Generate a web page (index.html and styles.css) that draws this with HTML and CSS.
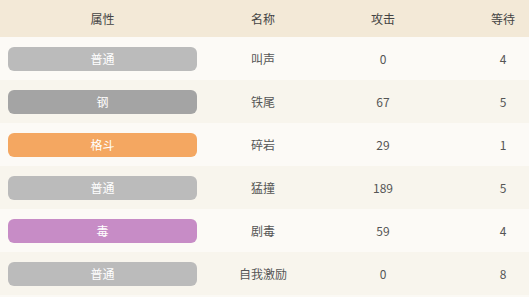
FILE: index.html
```html
<!DOCTYPE html>
<html lang="zh">
<head>
<meta charset="utf-8">
<link rel="stylesheet" href="styles.css">
</head>
<body>
<div class="table">
  <div class="row head">
    <div class="cell">属性</div><div class="cell">名称</div><div class="cell">攻击</div><div class="cell">等待</div>
  </div>
  <div class="row odd">
    <div class="cell"><span class="badge normal">普通</span></div><div class="cell">叫声</div><div class="cell">0</div><div class="cell">4</div>
  </div>
  <div class="row even">
    <div class="cell"><span class="badge steel">钢</span></div><div class="cell">铁尾</div><div class="cell">67</div><div class="cell">5</div>
  </div>
  <div class="row odd">
    <div class="cell"><span class="badge fight">格斗</span></div><div class="cell">碎岩</div><div class="cell">29</div><div class="cell">1</div>
  </div>
  <div class="row even">
    <div class="cell"><span class="badge normal">普通</span></div><div class="cell">猛撞</div><div class="cell">189</div><div class="cell">5</div>
  </div>
  <div class="row odd">
    <div class="cell"><span class="badge poison">毒</span></div><div class="cell">剧毒</div><div class="cell">59</div><div class="cell">4</div>
  </div>
  <div class="row even">
    <div class="cell"><span class="badge normal">普通</span></div><div class="cell">自我激励</div><div class="cell">0</div><div class="cell">8</div>
  </div>
</div>
</body>
</html>
```
FILE: styles.css
```css
html, body {
  margin: 0;
  padding: 0;
  background: #fbf9f4;
}
body {
  width: 529px;
  height: 297px;
  overflow: hidden;
  font-family: "Noto Sans CJK SC", "Noto Sans", sans-serif;
  font-size: 12px;
  color: #555;
}
.table {
  width: 529px;
}
.row {
  display: grid;
  grid-template-columns: 205px 116px 124px 84px;
  height: 43px;
  align-items: center;
}
.row.head {
  height: 37px;
  background: #f3e9d7;
  color: #444;
}
.row.odd { background: #fcfaf6; }
.row.even { background: #f8f5ed; }
.cell {
  text-align: center;
  line-height: 16px;
}
.cell:last-child {
  padding-left: 32px;
}
.badge {
  display: block;
  margin: 0 8px;
  height: 24px;
  line-height: 24px;
  border-radius: 6px;
  color: #fff;
}
.badge.normal { background: #bbbbbb; }
.badge.steel { background: #a4a4a4; }
.badge.fight { background: #f4a761; }
.badge.poison { background: #c78cc6; }
```
